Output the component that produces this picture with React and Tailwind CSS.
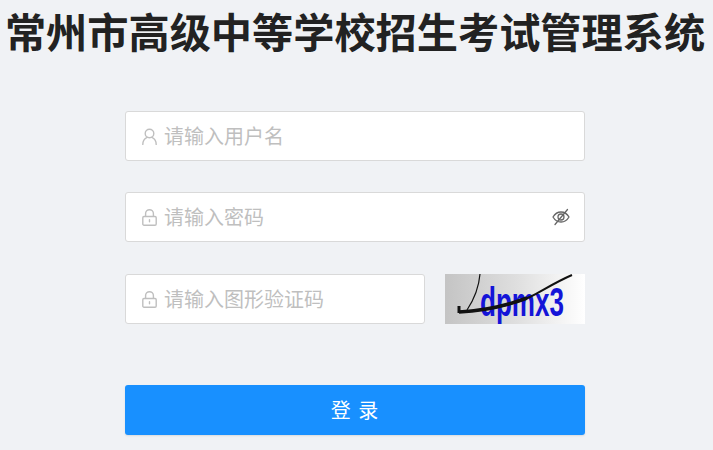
import React, { useState } from 'react';

const UserIcon = () => (
  <svg width="15" height="17" viewBox="0 0 15 17" fill="none" stroke="#bfbfbf" strokeWidth="1.4">
    <circle cx="7.500" cy="5.500" r="4.300" />
    <path d="M.8 16.500c0-3.800 2.400-6.400 4.400-7.200M14.200 16.500c0-3.800-2.400-6.400-4.400-7.200" strokeLinecap="round" />
  </svg>
);

const LockIcon = () => (
  <svg width="15" height="17" viewBox="0 0 15 17" fill="none" stroke="#bfbfbf" strokeWidth="1.4">
    <rect x=".8" y="7.500" width="13.400" height="8.700" rx="1.200" />
    <path d="M3.600 7.500V4.600a3.900 3.900 0 0 1 7.800 0v2.900" />
    <path d="M7.500 10.800v2" strokeLinecap="round" />
  </svg>
);

const EyeOffIcon = () => (
  <svg width="18" height="18" viewBox="0 0 18 18" fill="none" stroke="#666666" strokeWidth="1.3">
    <path d="M1 9c2-3.400 4.800-5 8-5s6 1.600 8 5c-2 3.400-4.800 5-8 5s-6-1.600-8-5z" />
    <circle cx="9" cy="9" r="3" />
    <path d="M15.500 1.500 3 16.500" strokeLinecap="round" />
  </svg>
);

const Captcha = () => (
  <svg width="140" height="50" viewBox="0 0 140 50" className="shrink-0">
    <defs>
      <linearGradient id="captchaBg" x1="0" x2="1" y1="0" y2="0">
        <stop offset="0" stopColor="#c4c4c4" />
        <stop offset="0.5" stopColor="#dedede" />
        <stop offset="1" stopColor="#ffffff" />
      </linearGradient>
    </defs>
    <rect width="140" height="50" fill="url(#captchaBg)" />
    <path d="M35 0c-1 12-5 24-13 36" fill="none" stroke="#111" strokeWidth="1.200" />
    <text
      x="35"
      y="42"
      fill="#1414d8"
      fontFamily="'Liberation Sans', sans-serif"
      fontWeight="700"
      fontSize="40"
      textLength="84"
      lengthAdjust="spacingAndGlyphs"
    >
      dpmx3
    </text>
    <path d="M14 38 C40 36 62 33 85 23 C100 15 113 7 127 1" fill="none" stroke="#111" strokeWidth="2" />
    <path d="M14 38C36 37 58 33 82 24" fill="none" stroke="#111" strokeWidth="3.500" />
    <path d="M14 32v7" stroke="#111" strokeWidth="3" />
  </svg>
);

const Field = ({ icon, placeholder, type = 'text', trailing, className = '' }) => (
  <div className={`flex items-center h-[50px] bg-white border border-[#d9d9d9] rounded-[3px] pl-[16px] pr-[14px] ${className}`}>
    <span className="w-[15px] mr-[7px] flex items-center shrink-0">{icon}</span>
    <input
      type={type}
      placeholder={placeholder}
      className="flex-1 min-w-0 pt-[2px] outline-none bg-transparent text-[20px] text-[#606266] placeholder:text-[#bfbfbf]"
    />
    {trailing}
  </div>
);

export default function App() {
  const [showPassword, setShowPassword] = useState(false);

  return (
    <div className="h-[450px] overflow-hidden bg-[#f0f2f5] font-['Liberation_Sans','Noto_Sans_CJK_SC',sans-serif]">
      <h1 className="text-center text-[41.2px] leading-[42px] pt-[13px] pr-[3px] font-bold text-[#222222] whitespace-nowrap">
        常州市高级中等学校招生考试管理系统
      </h1>

      <form className="w-[460px] ml-[125px] mt-[56px]" onSubmit={(e) => e.preventDefault()}>
        <Field icon={<UserIcon />} placeholder="请输入用户名" />
        <Field
          className="mt-[31px]"
          icon={<LockIcon />}
          placeholder="请输入密码"
          type={showPassword ? 'text' : 'password'}
          trailing={
            <button type="button" className="ml-2" onClick={() => setShowPassword(!showPassword)}>
              <EyeOffIcon />
            </button>
          }
        />
        <div className="flex gap-[20px] mt-[32px]">
          <Field className="w-[300px]" icon={<LockIcon />} placeholder="请输入图形验证码" />
          <Captcha />
        </div>
        <button
          type="submit"
          className="block w-full h-[50px] mt-[61px] pt-[2px] bg-[#1890ff] text-white text-[20px] tracking-[1px] rounded-[3px] shadow-[0_1px_2px_rgba(0,0,0,0.1)]"
        >
          登 录
        </button>
      </form>
    </div>
  );
}
